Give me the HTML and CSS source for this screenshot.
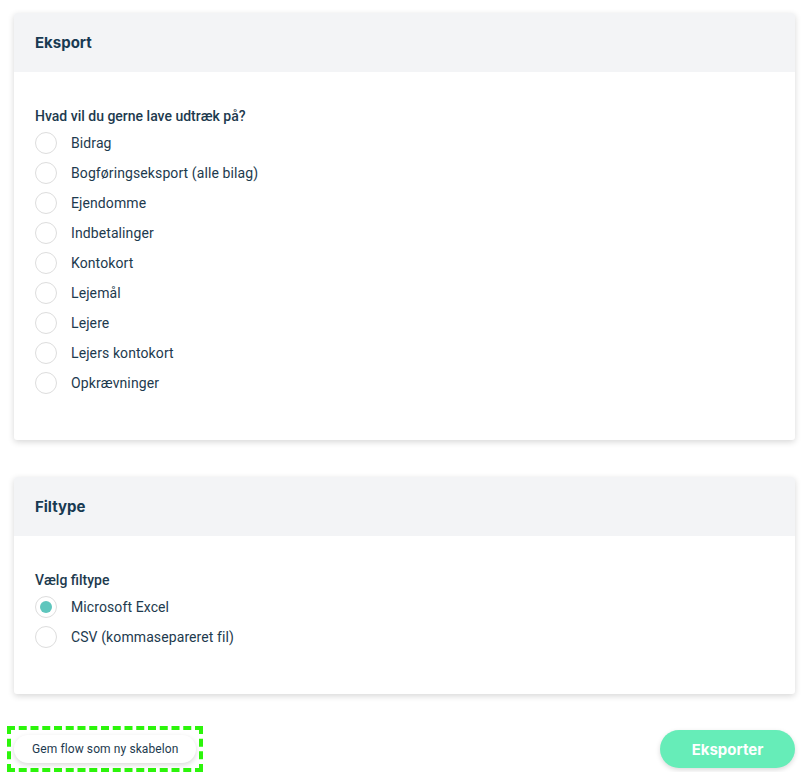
FILE: index.html
```html
<!DOCTYPE html>
<html lang="da">
<head>
    <meta charset="UTF-8">
    <meta name="viewport" content="width=device-width, initial-scale=1.0">
    <title>Eksport</title>
    <link rel="stylesheet" href="styles.css">
</head>
<body>

    <section class="card">
        <header class="card-header">
            <h2>Eksport</h2>
        </header>
        <div class="card-body">
            <p class="question">Hvad vil du gerne lave udtræk på?</p>
            <label class="radio"><input type="radio" name="type"><span class="dot"></span>Bidrag</label>
            <label class="radio"><input type="radio" name="type"><span class="dot"></span>Bogføringseksport (alle bilag)</label>
            <label class="radio"><input type="radio" name="type"><span class="dot"></span>Ejendomme</label>
            <label class="radio"><input type="radio" name="type"><span class="dot"></span>Indbetalinger</label>
            <label class="radio"><input type="radio" name="type"><span class="dot"></span>Kontokort</label>
            <label class="radio"><input type="radio" name="type"><span class="dot"></span>Lejemål</label>
            <label class="radio"><input type="radio" name="type"><span class="dot"></span>Lejere</label>
            <label class="radio"><input type="radio" name="type"><span class="dot"></span>Lejers kontokort</label>
            <label class="radio"><input type="radio" name="type"><span class="dot"></span>Opkrævninger</label>
        </div>
    </section>

    <section class="card">
        <header class="card-header">
            <h2>Filtype</h2>
        </header>
        <div class="card-body">
            <p class="question">Vælg filtype</p>
            <label class="radio"><input type="radio" name="file" checked><span class="dot"></span>Microsoft Excel</label>
            <label class="radio"><input type="radio" name="file"><span class="dot"></span>CSV (kommasepareret fil)</label>
        </div>
    </section>

    <div class="actions">
        <div class="highlight">
            <button class="btn-template">Gem flow som ny skabelon</button>
        </div>
        <button class="btn-export">Eksporter</button>
    </div>

</body>
</html>
```

FILE: styles.css
```css
body {
    font-family: Roboto, "Liberation Sans", sans-serif;
    background-color: #fff;
    color: #1d3a4e;
    margin: 0;
    padding: 13px 13px 0 14px;
}

.card {
    background-color: #fff;
    border-radius: 3px;
    box-shadow: 0 2px 6px rgba(0, 0, 0, 0.16);
    margin-bottom: 37px;
    overflow: hidden;
}

.card-header {
    background-color: #f3f4f6;
    height: 59px;
    display: flex;
    align-items: center;
    padding: 0 21px;
}

.card-header h2 {
    margin: 0;
    font-family: Inter, "Open Sans", sans-serif;
    font-size: 15px;
    font-weight: 700;
    color: #183a52;
}

.card-body {
    padding: 34px 21px 42px;
}

.question {
    margin: 0 0 2px;
    font-size: 14px;
    font-weight: 500;
    line-height: 20px;
}

.radio {
    display: flex;
    align-items: center;
    height: 30px;
    font-size: 14px;
    letter-spacing: 0.1px;
    cursor: pointer;
}

.radio input {
    display: none;
}

.dot {
    width: 20px;
    height: 20px;
    border: 1px solid #ddd;
    border-radius: 50%;
    margin-right: 14px;
    display: flex;
    align-items: center;
    justify-content: center;
}

.radio input:checked + .dot::after {
    content: "";
    width: 12px;
    height: 12px;
    border-radius: 50%;
    background-color: #5ec6bd;
}

.actions {
    display: flex;
    justify-content: space-between;
    align-items: center;
    margin-top: -5px;
}

.highlight {
    border: 4px dashed #2cf50b;
    padding: 5px 3px 5px 3px;
    margin-left: -7px;
}

.btn-template {
    background-color: #fff;
    border: none;
    border-radius: 14px;
    box-shadow: 0 2px 5px rgba(0, 0, 0, 0.15);
    font-family: Roboto, sans-serif;
    font-size: 12px;
    letter-spacing: 0.1px;
    color: #1d3a4e;
    height: 28px;
    padding: 0 18px;
    cursor: pointer;
}

.btn-export {
    background-color: #66edb8;
    border: none;
    border-radius: 19px;
    box-shadow: 0 2px 5px rgba(0, 0, 0, 0.15);
    font-family: Inter, "Open Sans", sans-serif;
    font-size: 15px;
    font-weight: 700;
    color: #fff;
    width: 135px;
    height: 38px;
    cursor: pointer;
}
```
